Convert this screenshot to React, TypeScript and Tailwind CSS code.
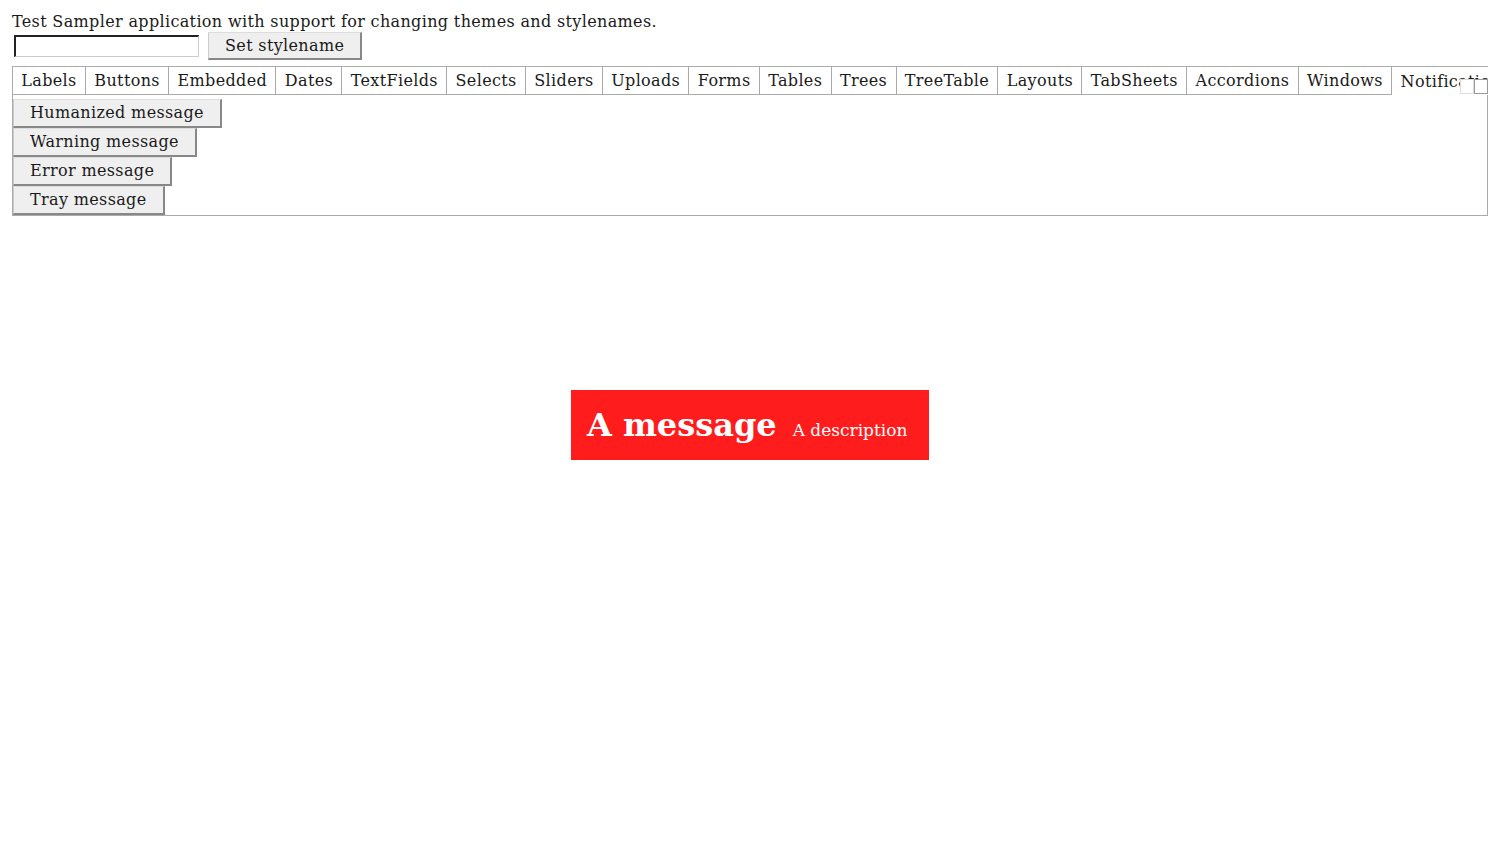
import { useState } from "react";

const tabs = [
  "Labels",
  "Buttons",
  "Embedded",
  "Dates",
  "TextFields",
  "Selects",
  "Sliders",
  "Uploads",
  "Forms",
  "Tables",
  "Trees",
  "TreeTable",
  "Layouts",
  "TabSheets",
  "Accordions",
  "Windows",
  "Notifications",
];

const messages = ["Humanized message", "Warning message", "Error message", "Tray message"];

export default function App() {
  const [styleName, setStyleName] = useState("");
  const [active, setActive] = useState("Notifications");

  return (
    <div className="relative min-h-[850px] bg-white px-3 pt-[12px] text-[16px] leading-5 tracking-[0.35px] text-[#1a1a1a] [font-family:'DejaVu_Serif',serif]">
      <div className="h-5">Test Sampler application with support for changing themes and stylenames.</div>

      <div className="flex h-7 items-center gap-[9px]">
        <input
          value={styleName}
          onChange={(e) => setStyleName(e.target.value)}
          className="ml-[2px] h-[22px] w-[185px] border border-t-2 border-l-2 border-t-[#222] border-l-[#222] border-r-[#ccc] border-b-[#ccc] bg-white px-1 outline-none"
        />
        <button className="h-7 border border-r-2 border-b-2 border-t-[#ddd] border-l-[#ccc] border-r-[#888] border-b-[#888] bg-[#efefef] px-[16px]">
          Set stylename
        </button>
      </div>

      <div className="relative mt-[6px]">
        <div className="flex h-[29px] overflow-hidden border-t border-l border-[#aaa]">
          {tabs.map((t) => (
            <div
              key={t}
              onClick={() => setActive(t)}
              className={
                "flex shrink-0 cursor-default items-center border-r border-[#aaa] px-[8.35px] pt-px " +
                (active === t ? "border-b-0" : "border-b")
              }
            >
              {t}
            </div>
          ))}
          <div className="flex-1 border-b border-[#aaa]" />
        </div>
        <div className="absolute right-0 top-[13px] flex">
          <div className="h-[15px] w-[14px] border border-[#ddd] bg-white" />
          <div className="h-[15px] w-[14px] border border-[#999] bg-white" />
        </div>
      </div>

      <div className="flex flex-col items-start border border-t-0 border-[#aaa] pt-[4px]">
        {messages.map((m) => (
          <button
            key={m}
            className="h-[29px] border border-r-2 border-b-2 border-t-[#ddd] border-l-[#ccc] border-r-[#888] border-b-[#888] bg-[#efefef] px-[16px] text-left"
          >
            {m}
          </button>
        ))}
      </div>

      <div className="absolute left-[571px] top-[390px] flex h-[70px] w-[358px] items-center bg-[#ff1c1c] pl-4 tracking-normal text-white">
        <span className="text-[32px] font-bold leading-none">A message</span>
        <span className="ml-4 mt-[10px] text-[17px]">A description</span>
      </div>
    </div>
  );
}
